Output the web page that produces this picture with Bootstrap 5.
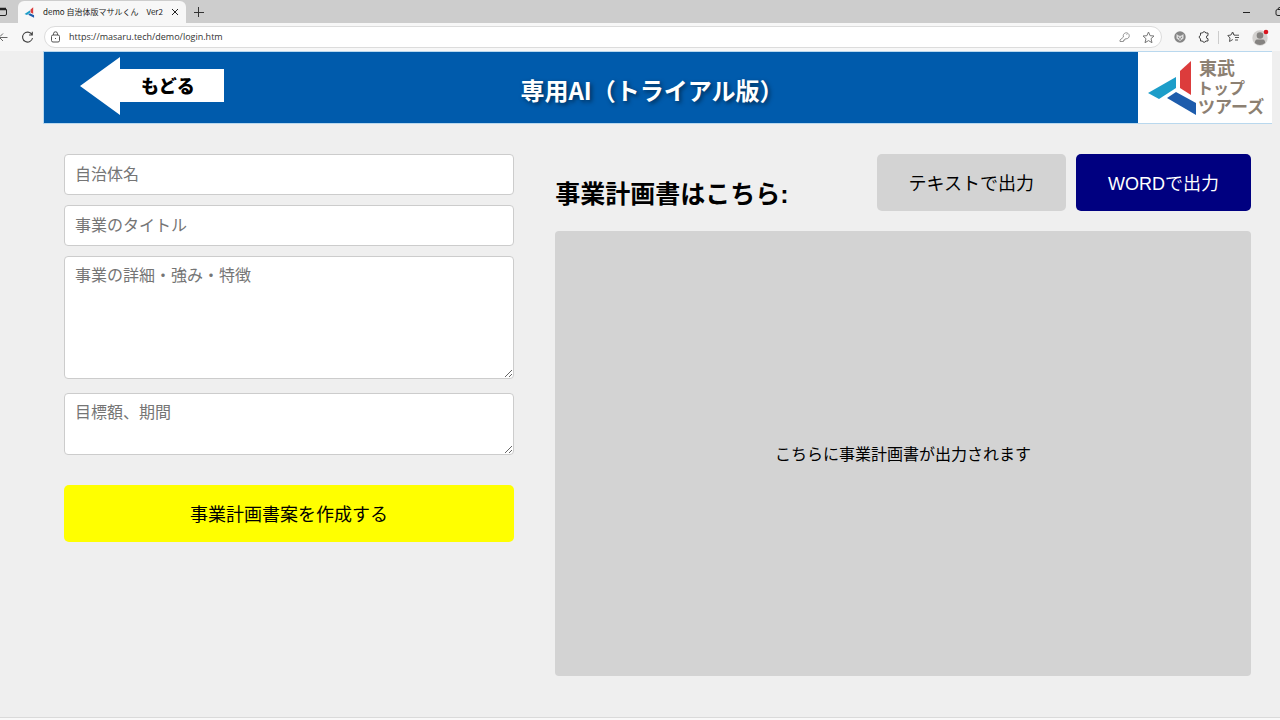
<!DOCTYPE html>
<html lang="ja">
<head>
<meta charset="utf-8">
<meta name="viewport" content="width=device-width, initial-scale=1">
<title>demo 自治体版マサルくん Ver2</title>
<link href="https://cdn.jsdelivr.net/npm/bootstrap@5.3.0/dist/css/bootstrap.min.css" rel="stylesheet">
<style>
body{font-family:"Liberation Sans","Noto Sans CJK JP",sans-serif;font-size:16px;background:#efefef;color:#000}
svg{display:block;flex-shrink:0}
.ui-btn{border:0;background:none;padding:0;color:#444}
.tab-strip{height:23px;background:#cdcdcd}
.page-tab{width:168px;background:#f7f7f7;border-radius:6px 6px 0 0;font:8px/22px "Noto Sans CJK JP",sans-serif;color:#222;padding:0 7px 0 6px}
.toolbar{height:28px;background:#f7f7f7;padding-right:11px}
.reload{margin:0 10px 0 13px}
.url-box{height:22px;background:#fff;border:1px solid #dcdcdc;border-radius:11px;padding:0 6px}
.url-box input{font:9px/20px "Open Sans","Noto Sans",sans-serif;color:#333;border:0;outline:0;background:none;min-width:0}
.viewport-area{padding:0 8px 0 43px}
.site-head{height:73px;background:#005bac;border:1px solid #b9d8ee;border-right:0}
.head-main{padding:4px 0 0 36px}
.head-main h1{font:700 24px/36px "Noto Sans CJK JP",sans-serif;text-shadow:2px 2px 4px rgba(0,0,0,.5);left:0;right:0;top:20px;padding-left:122px;pointer-events:none}
.brand{width:134px;background:#fff}
.work{display:grid;grid-template-columns:11fr 17fr;gap:41px;padding:30px 21px 41px}
.field{font-size:16px;line-height:20px;border:1px solid #ccc;border-radius:4px;padding:9px 10px;resize:none}
.field::placeholder{color:#757575}
textarea.field{resize:vertical}
input.field{height:41px;margin-bottom:10px}
.detail{height:123px;margin-bottom:14px}
.goal{height:62px;margin-bottom:30px}
.act{font-size:18px;line-height:27px;border:0;border-radius:5px;padding:17px 32px 13px;height:57px}
.make{background:#ff0;color:#000}
.outputs{gap:10px}
.plain-out{background:#d3d3d3;color:#000}
.word-out{background:navy;color:#fff}
.out-title{font-size:25px;font-weight:700;line-height:36px;margin:22px 0 0}
.output{background:#d3d3d3;border-radius:4px;margin-top:19px;padding-top:2px}
.bottom-edge{height:3px;background:#f9f9f9;border-top:1px solid #dadada}
</style>
</head>
<body class="d-flex flex-column min-vh-100">
<div class="tab-strip d-flex align-items-end flex-shrink-0 overflow-hidden">
  <button class="ui-btn align-self-center" aria-label="タブ操作"><svg width="18" height="12"><path d="M0 2.5H4.500Q6.500 2.500 6.500 4V8Q6.500 9.500 5 9.500H0" fill="none" stroke="#222"/><path d="M0 3H6" stroke="#222" stroke-width="2.500"/></svg></button>
  <div class="page-tab d-flex align-items-center">
    <svg width="11" height="11" viewBox="8 6 54 60"><path d="M8 44L39 24V36L21 50Z" fill="#1c9dc9"/><path d="M41 19L55 7V43L41 36Z" fill="#dc3c3c"/><path d="M28 48L37 40L60 51V65Z" fill="#1d5cac"/></svg>
    <span class="me-auto text-nowrap ps-2">demo 自治体版マサルくん　Ver2</span>
    <button class="ui-btn" aria-label="タブを閉じる"><svg width="8" height="8"><path d="M1 1L7 7M7 1L1 7" stroke="#222"/></svg></button>
  </div>
  <button class="ui-btn align-self-center ms-2" aria-label="新しいタブ"><svg width="10" height="10"><path d="M0 5.500H10M4.500 0V10" stroke="#333"/></svg></button>
  <button class="ui-btn align-self-center ms-auto me-4" aria-label="最小化"><svg width="8" height="8"><path d="M0 4.500H7" stroke="#222"/></svg></button>
  <button class="ui-btn align-self-center" aria-label="元に戻す"><svg width="5" height="9"><path d="M5 2.500H2.500Q1 2.500 1 4V7Q1 8.500 3 8.500H5M3 2Q3 .5 5 .5" fill="none" stroke="#222"/></svg></button>
</div>
<div class="toolbar d-flex align-items-center flex-shrink-0">
  <button class="ui-btn" aria-label="戻る"><svg width="8" height="12"><path d="M0 6.500H7.500M3 2.500L0 5.500M3 10L0 7" fill="none" stroke="#666"/></svg></button>
  <button class="ui-btn reload" aria-label="再読み込み"><svg width="13" height="13"><path d="M10.800 3.400A5 5 0 1 0 11.500 7M11.300 .8V4H8" fill="none" stroke="#444" stroke-width="1.100"/></svg></button>
  <div class="url-box d-flex align-items-center flex-grow-1">
    <svg width="10" height="12" fill="none" stroke="#555"><rect x=".5" y="4" width="8" height="7" rx="1.500"/><path d="M2.500 4V2.800a2 2 0 0 1 4 0V4M4 7.500h1"/></svg>
    <input class="flex-grow-1 ps-2 py-0" aria-label="アドレス" value="https://masaru.tech/demo/login.htm">
    <button class="ui-btn me-2 pe-1" aria-label="パスワード"><svg width="11" height="12" fill="none" stroke="#888" stroke-width=".9"><path d="M4.500 6A3 3 0 1 1 7 7.800L5.800 8V9.200H4.500V10.500H1V9Z"/><path d="M7.500 3.500h.7"/></svg></button>
    <button class="ui-btn" aria-label="お気に入りに追加"><svg width="13" height="13"><path d="M6.500 1L8.100 4.700L12 5L9 7.700L10 11.700L6.500 9.600L3 11.700L4 7.700L1 5L4.900 4.700Z" fill="none" stroke="#777" stroke-linejoin="round"/></svg></button>
  </div>
  <button class="ui-btn ms-2 ps-1" aria-label="拡張機能 M"><svg width="12" height="12"><circle cx="6" cy="6" r="5.700" fill="#858585"/><path d="M2.500 3L5 4.800H7L9.500 3L9.500 7.500L6 10L2.500 7.500Z" fill="#ddd"/><path d="M4 6l1.200.7M8 6l-1.200.7M5 8h2" stroke="#777"/></svg></button>
  <button class="ui-btn ms-2 ps-1" aria-label="拡張機能"><svg width="12" height="12"><path d="M3 2H4.500A1.700 1.700 0 0 1 7.800 2H10V4.500A1.600 1.600 0 0 0 10 7.700V10H7.800A1.700 1.700 0 0 1 4.500 10H2.500V7.700A1.700 1.700 0 0 1 2.500 4.400V2Z" fill="none" stroke="#444" stroke-linejoin="round"/></svg></button>
  <svg class="ms-2" width="1" height="13"><path d="M.5 0V13" stroke="#ccc"/></svg>
  <button class="ui-btn ms-2" aria-label="お気に入り"><svg width="13" height="12"><path d="M7 4L5.500 1L4 4L.8 4.500L3 7L2.500 10.500L5.800 8.500M5.500 1L7 4.200H12M8 6.500H12M8 9H11" fill="none" stroke="#555"/></svg></button>
  <button class="ui-btn ms-2 ps-1" aria-label="プロフィール"><svg width="17" height="17"><circle cx="8" cy="9" r="7.700" fill="#d3d1cf"/><circle cx="8" cy="6.500" r="3.300" fill="#858381"/><path d="M2.800 14Q3 10.500 5 10.500H11Q13 10.500 13.200 14Q8 18 2.800 14" fill="#858381"/><circle cx="14" cy="3" r="2.300" fill="#d9141e"/></svg></button>
</div>
<div class="viewport-area d-flex flex-column flex-grow-1">
  <header class="site-head d-flex">
    <div class="head-main flex-grow-1 position-relative">
      <a href="#" class="d-inline-block"><svg width="144" height="60"><path d="M0 30L40 1V13H144V46H40V59Z" fill="#fff"/><text x="61" y="37" font-size="18" font-weight="900" font-family="Noto Sans CJK JP,sans-serif">もどる</text></svg></a>
      <h1 class="text-white text-center position-absolute mb-0">専用AI（トライアル版）</h1>
    </div>
    <div class="brand">
      <svg width="134" height="72" viewBox="0 0 134 72"><path d="M10 41L38 25V36L21 47Z" fill="#1c9dc9"/><path d="M42 19L53 9V43L42 36Z" fill="#dc3c3c"/><path d="M29 46L38 40L58 51V63Z" fill="#1d5cac"/><text font-family="Noto Sans CJK JP,sans-serif" font-weight="700" fill="#8c8072"><tspan x="61" y="23" font-size="18">東武</tspan><tspan x="59" y="42" font-size="16">トップ</tspan><tspan x="60" y="61" font-size="17">ツアーズ</tspan></text></svg>
    </div>
  </header>
  <main class="work flex-grow-1">
    <form>
      <input class="field d-block w-100" placeholder="自治体名" aria-label="自治体名">
      <input class="field d-block w-100" placeholder="事業のタイトル" aria-label="事業のタイトル">
      <textarea class="field detail d-block w-100" placeholder="事業の詳細・強み・特徴" aria-label="事業の詳細・強み・特徴"></textarea>
      <textarea class="field goal d-block w-100" placeholder="目標額、期間" aria-label="目標額、期間"></textarea>
      <button type="button" class="act make w-100">事業計画書案を作成する</button>
    </form>
    <section class="d-flex flex-column">
      <div class="outputs d-flex align-items-start">
        <h2 class="out-title me-auto">事業計画書はこちら:</h2>
        <button type="button" class="act plain-out">テキストで出力</button>
        <button type="button" class="act word-out">WORDで出力</button>
      </div>
      <div class="output flex-grow-1 d-flex align-items-center justify-content-center">こちらに事業計画書が出力されます</div>
    </section>
  </main>
</div>
<div class="bottom-edge flex-shrink-0"></div>
<script src="https://cdn.jsdelivr.net/npm/bootstrap@5.3.0/dist/js/bootstrap.bundle.min.js"></script>
</body>
</html>
